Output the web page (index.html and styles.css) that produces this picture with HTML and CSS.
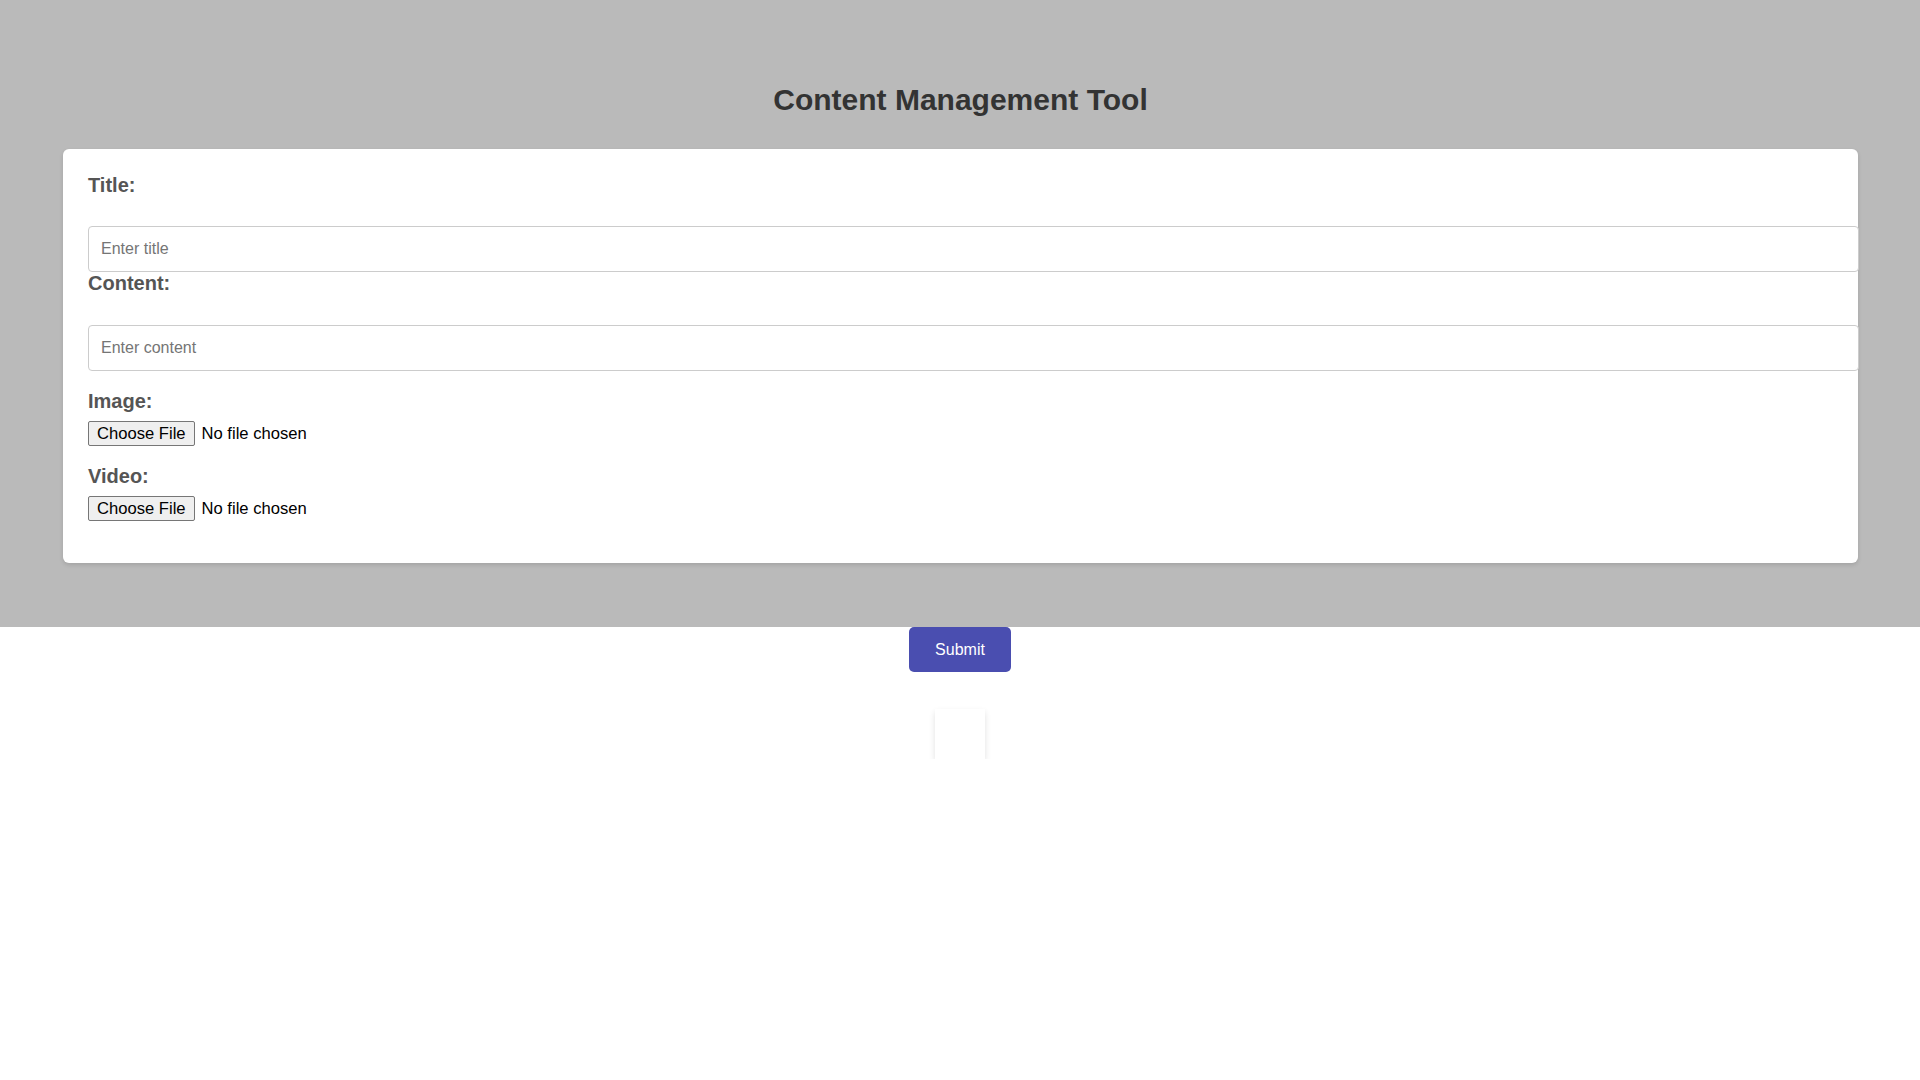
FILE: index.html
```html
<!DOCTYPE html>
<html lang="en">
<head>
<meta charset="utf-8">
<title>Content Management Tool</title>
<link rel="stylesheet" href="styles.css">
</head>
<body>
  <div class="page">
    <h1 class="page-title">Content Management Tool</h1>
    <form class="card">
      <div class="field-text field-first">
        <label class="label" for="title">Title:</label>
        <input class="text-input" id="title" type="text" placeholder="Enter title">
      </div>
      <div class="field-text">
        <label class="label" for="content">Content:</label>
        <input class="text-input" id="content" type="text" placeholder="Enter content">
      </div>
      <div class="field-file">
        <label class="label" for="image">Image:</label>
        <input class="file-input" id="image" type="file">
      </div>
      <div class="field-file">
        <label class="label" for="video">Video:</label>
        <input class="file-input" id="video" type="file">
      </div>
    </form>
  </div>
  <div class="actions">
    <button class="submit" type="button">Submit</button>
    <div class="preview"></div>
  </div>
</body>
</html>
```
FILE: styles.css
```css
html, body {
  margin: 0;
  padding: 0;
  background: #ffffff;
  font-family: "Liberation Sans", Arial, sans-serif;
}

.page {
  background: #bababa;
  padding: 82px 62px 64px 63px;
}

.page-title {
  margin: 0 0 32px;
  font-size: 30px;
  line-height: 35px;
  font-weight: bold;
  color: #333333;
  text-align: center;
}

.card {
  background: #ffffff;
  border-radius: 6px;
  box-shadow: 0 2px 4px rgba(0, 0, 0, 0.12);
  padding: 25px 25px 42px;
  margin: 0;
}

.label {
  display: block;
  font-size: 20px;
  line-height: 23px;
  font-weight: bold;
  color: #555555;
}

.field-text .label {
  margin-bottom: 30px;
}

.field-first .label {
  margin-bottom: 29px;
}

.text-input {
  display: block;
  box-sizing: content-box;
  width: 100%;
  height: 18px;
  margin: 0;
  padding: 13px 12px;
  line-height: 18px;
  font-size: 16px;
  font-family: "Liberation Sans", Arial, sans-serif;
  border: 1px solid #cccccc;
  border-radius: 4px;
  color: #333333;
  background: #ffffff;
  outline: none;
}

.text-input::placeholder {
  color: #757575;
}

.field-file {
  margin-top: 19px;
}

.field-file .label {
  margin-bottom: 8px;
}

.file-input {
  display: block;
  height: 25px;
  margin: 0;
  padding: 0;
  font-size: 16.6px;
  line-height: 19px;
  font-family: "Liberation Sans", Arial, sans-serif;
  color: #000000;
}

.file-input::file-selector-button {
  box-sizing: border-box;
  height: 25px;
  margin: 0 7px 0 0;
  padding: 1px 8px;
  font-size: 16.6px;
  font-family: "Liberation Sans", Arial, sans-serif;
  color: #000000;
  background: #efefef;
  border: 1px solid #767676;
  border-radius: 2px;
}

.actions {
  display: flex;
  flex-direction: column;
  align-items: center;
}

.submit {
  width: 102px;
  height: 45px;
  padding: 0;
  border: none;
  border-radius: 5px;
  background: #4a4eb0;
  color: #ffffff;
  font-size: 16px;
  font-family: "Liberation Sans", Arial, sans-serif;
  cursor: pointer;
}

.preview {
  width: 50px;
  height: 50px;
  margin-top: 37px;
  background: #ffffff;
  box-shadow: 0 3px 6px rgba(0, 0, 0, 0.12);
}
```
